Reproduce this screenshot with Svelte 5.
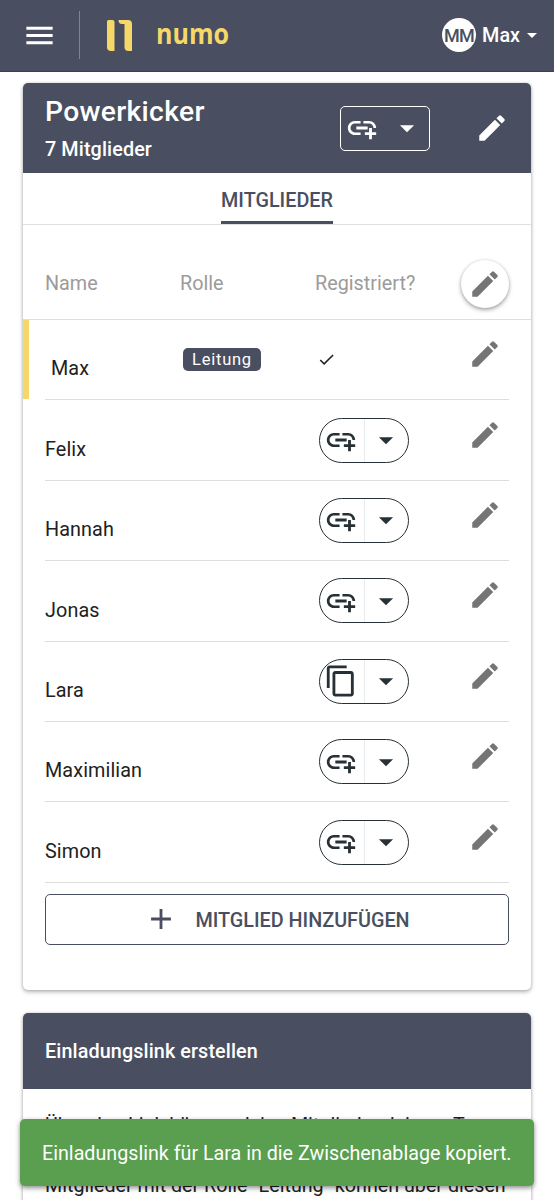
<script>
  const icons = {
    menu: "M3 18h18v-2H3v2zm0-5h18v-2H3v2zm0-7v2h18V6H3z",
    edit:
      "M3 17.25V21h3.75L17.81 9.94l-3.75-3.75L3 17.25zM20.71 7.04a.996.996 0 0 0 0-1.41l-2.34-2.34a.996.996 0 0 0-1.41 0l-1.83 1.83 3.75 3.75 1.83-1.83z",
    addLink:
      "M8 11h8v2H8v-2zm12.1 1H22c0-2.76-2.24-5-5-5h-4v1.9h4c1.71 0 3.1 1.39 3.1 3.1zM3.9 12c0-1.71 1.39-3.1 3.1-3.1h4V7H7c-2.76 0-5 2.24-5 5s2.24 5 5 5h4v-1.9H7c-1.71 0-3.1-1.39-3.1-3.1zM19 12h-2v3h-3v2h3v3h2v-3h3v-2h-3v-3z",
    copy:
      "M16 1H4c-1.1 0-2 .9-2 2v14h2V3h12V1zm3 4H8c-1.1 0-2 .9-2 2v14c0 1.1.9 2 2 2h11c1.1 0 2-.9 2-2V7c0-1.1-.9-2-2-2zm0 16H8V7h11v14z",
    dropdown: "M7 10l5 5 5-5z",
    check: "M9 16.17L4.83 12l-1.42 1.41L9 19 21 7l-1.41-1.41z",
    add: "M19 13h-6v6h-2v-6H5v-2h6V5h2v6h6v2z"
  };

  const members = [
    { name: "Max", role: "Leitung", registered: true, self: true },
    { name: "Felix", link: "addLink" },
    { name: "Hannah", link: "addLink" },
    { name: "Jonas", link: "addLink" },
    { name: "Lara", link: "copy" },
    { name: "Maximilian", link: "addLink" },
    { name: "Simon", link: "addLink" }
  ];
</script>

{#snippet icon(name)}
  <svg class="icon" viewBox="0 0 24 24" aria-hidden="true">
    <path d={icons[name]} />
  </svg>
{/snippet}

<div class="page">
  <header class="topbar">
    <button class="menu" aria-label="Menü">{@render icon("menu")}</button>
    <span class="separator"></span>
    <svg class="mark" viewBox="0 0 26 31" aria-hidden="true">
      <path d="M0 1.5Q0 0 1.5 0H5.5Q7.5 0 7.5 2V31H4Q0 31 0 27Z" />
      <path d="M11.5 0H21Q25 0 25 4V31H21.5Q17.5 31 17.5 27V4H15Q11.5 4 11.5 0Z" />
    </svg>
    <svg class="brand" width="78" height="50" viewBox="0 0 78 50">
      <text x="1" y="34" textLength="73" lengthAdjust="spacingAndGlyphs">numo</text>
    </svg>
    <button class="account">
      <span class="avatar">MM</span>
      <span class="user">Max</span>
      <span class="caret"></span>
    </button>
  </header>

  <main>
    <section class="card team">
      <div class="card-header">
        <div class="title">
          <h1>Powerkicker</h1>
          <p>7 Mitglieder</p>
        </div>
        <div class="split light">
          <button aria-label="Link erstellen">{@render icon("addLink")}</button>
          <button aria-label="Mehr">{@render icon("dropdown")}</button>
        </div>
        <button class="edit" aria-label="Bearbeiten">{@render icon("edit")}</button>
      </div>

      <nav class="tabs"><span class="tab">Mitglieder</span></nav>

      <div class="row head">
        <span>Name</span>
        <span>Rolle</span>
        <span>Registriert?</span>
        <button class="edit fab" aria-label="Bearbeiten">{@render icon("edit")}</button>
      </div>

      {#each members as member}
        <div class="row" class:self={member.self}>
          <span class="name">{member.name}</span>
          <span class="role">
            {#if member.role}<span class="badge">{member.role}</span>{/if}
          </span>
          <span class="status">
            {#if member.registered}
              <span class="check">{@render icon("check")}</span>
            {:else}
              <span class="split pill">
                <button aria-label="Link">{@render icon(member.link)}</button>
                <button aria-label="Mehr">{@render icon("dropdown")}</button>
              </span>
            {/if}
          </span>
          <button class="edit" aria-label="Bearbeiten">{@render icon("edit")}</button>
        </div>
      {/each}

      <button class="add">
        {@render icon("add")}
        <span>Mitglied hinzufügen</span>
      </button>
    </section>

    <section class="card invite">
      <div class="card-header"><h2>Einladungslink erstellen</h2></div>
      <p>
        Über den Link können deine Mitglieder deinem Team
        <br />
        selbst beitreten.
        <br />
        Mitglieder mit der Rolle "Leitung" können über diesen
      </p>
    </section>
  </main>

  <div class="snackbar">Einladungslink für Lara in die Zwischenablage kopiert.</div>
</div>

<style>
  :global(body) {
    background: #fff;
    overflow: hidden;
  }

  .page {
    position: relative;
    height: 1200px;
    overflow: hidden;
    font-family: Roboto, "Liberation Sans", sans-serif;
    font-size: 19.8px;
    line-height: 1.5;
    color: #212121;
  }

  h1,
  h2,
  p {
    margin: 0;
    font-weight: 500;
  }

  button {
    margin: 0;
    padding: 0;
    border: 0;
    background: none;
    font: inherit;
    color: inherit;
  }

  .icon {
    display: block;
    width: 34px;
    height: 34px;
    flex-shrink: 0;
    fill: currentColor;
  }

  .topbar {
    box-sizing: border-box;
    display: flex;
    align-items: center;
    height: 72px;
    padding: 0 17px 1px 22px;
    background: #494f60;
    border-bottom: 1px solid #3c4251;
    color: #fff;
  }

  .menu .icon {
    width: 35px;
    height: 35px;
  }

  .separator {
    width: 1px;
    height: 48px;
    margin: 0 27px 0 22px;
    background: #7f8491;
  }

  .mark {
    width: 26px;
    height: 31px;
    margin-right: 22px;
    fill: #f5d867;
  }

  .brand {
    overflow: visible;
  }

  .brand text {
    font-family: "Open Sans", "Noto Sans", sans-serif;
    font-size: 29px;
    font-weight: 700;
    fill: #f5d867;
  }

  .account {
    display: flex;
    align-items: center;
    margin-left: auto;
    font-weight: 500;
  }

  .avatar {
    width: 34px;
    height: 34px;
    margin-right: 6px;
    border-radius: 50%;
    background: #fff;
    color: #494f60;
    font-size: 18px;
    font-weight: 500;
    line-height: 35px;
    letter-spacing: -0.6px;
    text-align: center;
  }

  .user {
    padding-top: 2px;
  }

  .caret {
    margin-left: 7px;
    border: 5px solid transparent;
    border-top-color: #fff;
    border-bottom: 0;
  }

  main {
    padding: 11px 23px 0;
  }

  .card {
    border-radius: 5px;
    background: #fff;
    box-shadow: 0 2px 4px rgba(0, 0, 0, 0.28), 0 0 3px rgba(0, 0, 0, 0.16);
  }

  .team {
    height: 907px;
    margin-bottom: 23px;
  }

  .card-header {
    display: flex;
    box-sizing: border-box;
    padding: 0 22px;
    border-radius: 5px 5px 0 0;
    background: #494f60;
    color: #fff;
  }

  .team .card-header {
    align-items: center;
    height: 90px;
  }

  .title {
    flex: 1;
    padding-top: 6px;
  }

  h1 {
    font-size: 28.2px;
    line-height: 38px;
    letter-spacing: 0.35px;
  }

  .title p {
    line-height: 38px;
    letter-spacing: 0.1px;
  }

  .split {
    display: flex;
    box-sizing: border-box;
    width: 90px;
    height: 45px;
    border: 1.5px solid currentColor;
    border-radius: 5px;
  }

  .split button {
    display: flex;
    flex: 1;
    align-items: center;
    justify-content: center;
  }

  .split button:first-child {
    padding-right: 2px;
  }

  .split button:last-child {
    padding-right: 1px;
  }

  .light {
    margin-right: 45px;
  }

  .pill {
    margin-left: 3.5px;
    border-radius: 23px;
    color: #263035;
  }

  .pill button:first-child {
    border-right: 1px solid #e9ecec;
  }

  .tabs {
    box-sizing: border-box;
    display: flex;
    justify-content: center;
    height: 52px;
    border-bottom: 1px solid #e0e0e0;
  }

  .tab {
    box-sizing: border-box;
    height: 51px;
    border-bottom: 3px solid #494f60;
    color: #494f60;
    font-weight: 500;
    line-height: 55px;
    text-transform: uppercase;
  }

  .row {
    display: grid;
    grid-template-columns: 135px 135px 145px 1fr;
    align-items: center;
    box-sizing: border-box;
    height: 80.4px;
    margin: 0 22px;
    border-bottom: 1px solid #dedede;
  }

  .head {
    height: 95px;
    margin: 0;
    padding: 23px 22px 0;
    color: #9b9b9b;
  }

  .self {
    margin-left: 0;
    padding: 0 0 1px 28px;
    border: 0;
    background:
      linear-gradient(#f5d867, #f5d867) 0 0 / 6px calc(100% - 1px) no-repeat,
      linear-gradient(#dedede, #dedede) 22px 100% / 100% 1px no-repeat;
    grid-template-columns: 129px 135px 145px 1fr;
  }

  .name {
    padding-top: 19px;
    letter-spacing: 0.1px;
  }

  .badge {
    display: block;
    width: 78px;
    margin: -1px 0 0 3px;
    border-radius: 5px;
    background: #494f60;
    color: #fff;
    font-size: 16.5px;
    line-height: 23px;
    letter-spacing: 0.75px;
    text-align: center;
  }

  .check .icon {
    width: 19px;
    height: 19px;
    margin-left: 2px;
  }

  .edit {
    justify-self: center;
  }

  .row .edit {
    margin-top: -11px;
    color: #757575;
  }

  .row .fab {
    width: 48px;
    height: 48px;
    margin-top: 0;
    padding: 7px;
    border-radius: 50%;
    background: #fff;
    box-shadow: 0 2px 4px rgba(0, 0, 0, 0.35), 0 0 3px rgba(0, 0, 0, 0.1);
  }

  .add {
    display: flex;
    align-items: center;
    justify-content: center;
    box-sizing: border-box;
    width: 464px;
    height: 51px;
    margin: 11px 22px 0;
    border: 1.5px solid #494f60;
    border-radius: 5px;
    color: #494f60;
    font-weight: 500;
    text-transform: uppercase;
  }

  .add span {
    margin-left: 17px;
    padding-top: 3px;
  }

  .invite {
    height: 300px;
  }

  .invite .card-header {
    align-items: center;
    height: 76px;
    padding-top: 1px;
  }

  h2 {
    font-size: 19.8px;
    letter-spacing: 0.1px;
  }

  .invite p {
    padding: 22px 22px 0;
    font-size: 19.7px;
    font-weight: 400;
    line-height: 29.8px;
    white-space: nowrap;
  }

  .snackbar {
    position: absolute;
    right: 20px;
    bottom: 14.5px;
    left: 20px;
    box-sizing: border-box;
    height: 67px;
    padding-left: 22px;
    border-radius: 5px;
    background: #5a9e4f;
    box-shadow: 0 2px 5px rgba(0, 0, 0, 0.45);
    color: #fff;
    font-size: 19.7px;
    line-height: 70px;
    white-space: nowrap;
  }
</style>
